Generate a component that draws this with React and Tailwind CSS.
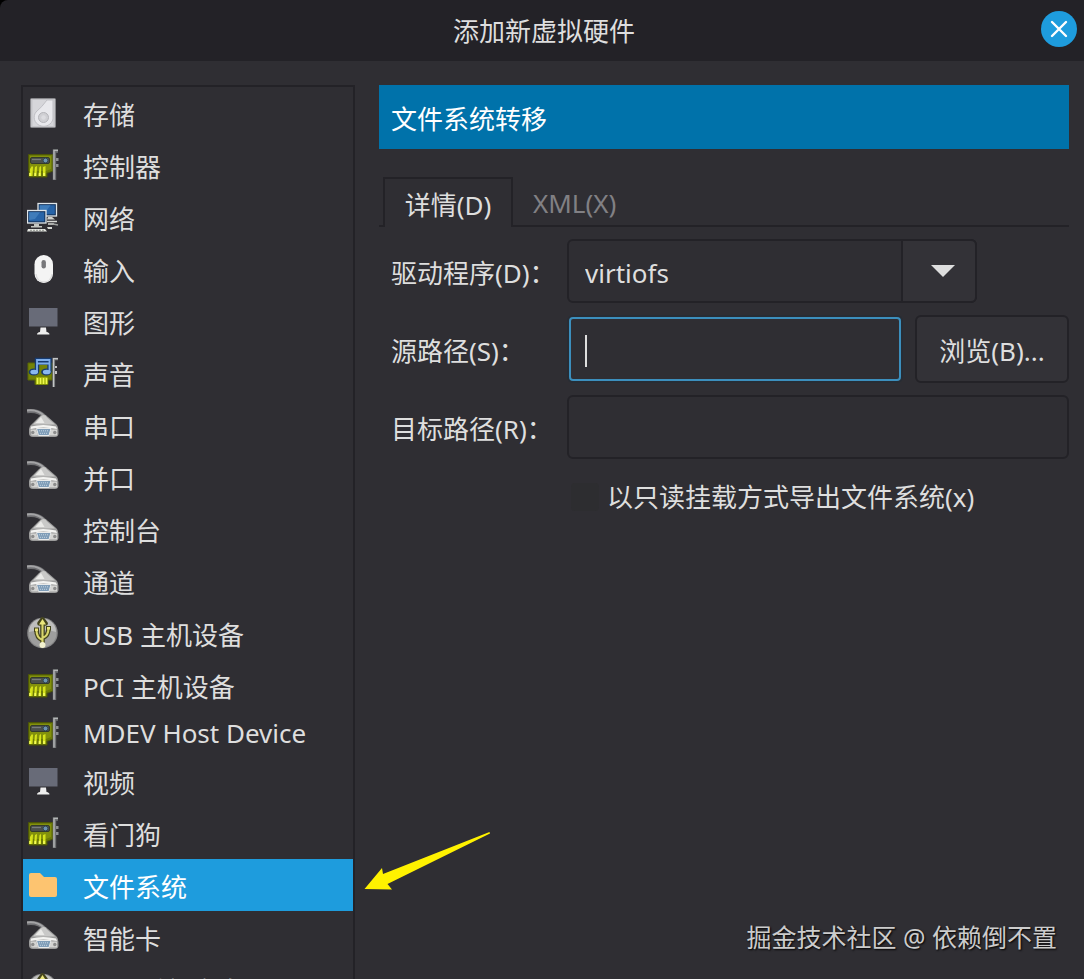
const base = "block h-8 w-8 shrink-0";

function StorageIcon() {
  return (
    <svg viewBox="0 0 32 32" className={base} aria-hidden="true">
      <rect x="3.5" y="1.5" width="25" height="29" rx="1" fill="#c4c4c8" stroke="#88888c" />
      <rect x="5.5" y="3" width="21" height="26" fill="#d6d6da" />
      <path d="M26 3 V22 A9.5 9 0 1 1 9 15 Q15 10 20 3 Z" fill="#e8e8ec" stroke="#bfbfc4" />
      <circle cx="16.5" cy="20.5" r="5" fill="#cfcfd3" stroke="#b4b4b9" />
      <circle cx="16.5" cy="20.5" r="2.3" fill="#dcdce0" />
    </svg>
  );
}

function CardIcon() {
  return (
    <svg viewBox="0 0 32 32" className={base} aria-hidden="true">
      <path d="M1.5 5.5 H26 V22 L21 24 H20 V28 H2 V22 H1.5 Z" fill="#6c7a08" stroke="#4c5508" />
      <path d="M3 7 H24 V20 L19 22 H3 Z" fill="#83910c" />
      <rect x="3.5" y="8.5" width="19" height="6" rx="1.5" fill="#4b504c" stroke="#343a2c" />
      <path d="M5 10.5 H14" stroke="#777b7b" strokeWidth="1.2" />
      <circle cx="18.5" cy="11.5" r="2.4" fill="#6d92b0" stroke="#314754" />
      <g fill="#d5e31b">
        <path d="M3 20 L5 17 L6 18 L5.5 27 H2.5Z" />
        <path d="M8 18 L10 17 L9.5 27 H7Z" />
        <path d="M12.5 18 L14 17 V27 H11.5Z" />
        <path d="M16 18 L18.5 17 V27 H16Z" />
      </g>
      <path d="M3 24 V27 M8.2 24 V27 M12.6 24 V27 M17 24 V27" stroke="#f2fb5c" strokeWidth="1.6" />
      <path d="M31 2 H27.5 V31" fill="none" stroke="#6f7173" strokeWidth="3.4" />
      <path d="M31 1.4 H27 V30.5" fill="none" stroke="#b4b6b7" strokeWidth="1.4" />
      <path d="M29 9 H31.5 V12 H29Z M29 15 H31.5 V18 H29Z" fill="#8e9092" />
    </svg>
  );
}

function Screen({ transform }) {
  return (
    <g transform={transform}>
      <rect x="0.5" y="0.5" width="18.5" height="12.5" fill="#15345d" stroke="#dfe5e8" strokeWidth="1.3" />
      <path d="M2.2 2.2 H17.3 V11.3 H2.2Z" fill="#2764a8" />
      <path d="M2.2 2.2 H13 L8 9 L2.2 10Z" fill="#3f7cba" />
    </g>
  );
}

function NetworkIcon() {
  return (
    <svg viewBox="0 0 32 32" className={base} aria-hidden="true">
      <Screen transform="translate(10.5 2)" />
      <path d="M21 16 H25 L28 18.5 H20Z" fill="#cfd1cd" />
      <path d="M20 20.5 H30 M21 23 H27" stroke="#d6d8d4" strokeWidth="1.3" />
      <path d="M26 23 L31 24" stroke="#9fa2a0" strokeWidth="1.5" />
      <Screen transform="translate(0 9)" />
      <path d="M7 23 H12 V25 H15 V26.5 H4 V25 H7Z" fill="#c3c6c1" />
      <path d="M1 28 H18 L20 30.5 H0Z" fill="#e4e6e1" />
      <path d="M3 29.3 H17" stroke="#8e918c" strokeDasharray="2 1" />
      <path d="M20 26 H25 V28 H21Z" fill="#d6d8d4" />
    </svg>
  );
}

function MouseIcon() {
  return (
    <svg viewBox="0 0 32 32" className={base} aria-hidden="true">
      <rect x="7.5" y="2" width="18.5" height="28" rx="9.2" fill="#f4f4f4" />
      <path d="M9 21 Q10 29 17 29 Q24 29 25 21" fill="none" stroke="#dcdcdc" strokeWidth="1.3" />
      <rect x="14.5" y="7" width="4.4" height="8.5" rx="2.2" fill="#77777a" />
    </svg>
  );
}

function DisplayIcon() {
  return (
    <svg viewBox="0 0 32 32" className={base} aria-hidden="true">
      <rect x="2" y="3" width="28.5" height="18.5" fill="#686b78" />
      <path d="M13.5 22.5 H19 L19.5 27 Q22.5 27.5 22.5 29.5 H10 Q10 27.5 13 27Z" fill="#eeeeee" />
    </svg>
  );
}

function SoundIcon() {
  return (
    <svg viewBox="0 0 32 32" className={base} aria-hidden="true">
      <path d="M1 6 H25 V23 H21 V27.5 H8 V23 H1Z" fill="#748307" stroke="#596606" />
      <path d="M9 20 H20.5 V27.5 H9Z" fill="#a3b30c" />
      <path d="M10.5 21 V27 M13.5 21 V27 M16.5 21 V27 M19.5 21 V27" stroke="#eef84e" strokeWidth="1.6" />
      <path d="M31 2 H26.8 V30" fill="none" stroke="#77797b" strokeWidth="2.6" />
      <path d="M31 1.6 H26.5 V30" fill="none" stroke="#c3c5c6" strokeWidth="1.2" />
      <path d="M29 9 V11 M29 14 V17" stroke="#f2f2f2" strokeWidth="1.5" />
      <path d="M10 15 V3 H22.5 V15 M10 5.5 H22.5" fill="none" stroke="#173b70" strokeWidth="4.4" />
      <ellipse cx="6.8" cy="15" rx="5.2" ry="3.6" fill="#173b70" />
      <ellipse cx="19.3" cy="15" rx="5.2" ry="3.6" fill="#173b70" />
      <path d="M10 15 V3 H22.5 V15 M10 6.5 H22.5" fill="none" stroke="#7dadea" strokeWidth="1.8" />
      <ellipse cx="7.2" cy="15" rx="3.9" ry="2.3" fill="#8ab8f0" />
      <ellipse cx="19.7" cy="15" rx="3.9" ry="2.3" fill="#8ab8f0" />
    </svg>
  );
}

function PortIcon() {
  return (
    <svg viewBox="0 0 32 32" className={base} aria-hidden="true">
      <path d="M0 2.2 Q11 0.5 18 8" fill="none" stroke="#6f6f72" strokeWidth="4" />
      <path d="M0 1.6 Q11 0 17.5 7.5" fill="none" stroke="#a4a4a6" strokeWidth="2" />
      <path d="M12 8 Q17 3 21 8 L28.5 14.5 Q32 17 31.5 25 Q31 28 28 28 H6 Q2 28 2 24 V20 Q3 16 6 14Z" fill="#9b9b9b" />
      <path d="M13 8 Q17 4 20 8.5 L28 15.5 H6Z" fill="#c9c9c8" />
      <path d="M14 8 L17.5 14 H8.5Z" fill="#eaeae8" />
      <path d="M4 17.5 Q16 14.5 29 17.5 L30 20 Q16 17 3.5 20Z" fill="#f4f4f2" />
      <path d="M3.5 20.5 H9 L11 26.5 H4.5Z M24 20.5 H30 V26.5 H22Z" fill="#d4d4d2" />
      <circle cx="5.8" cy="23.5" r="1.7" fill="#8c8c8c" />
      <circle cx="27.8" cy="23.5" r="1.7" fill="#8c8c8c" />
      <path d="M9.5 19.5 H24 L22 26.5 H11.5Z" fill="#7f9db8" stroke="#e9eaea" />
      <path d="M12 21.8 H22 M13 24.3 H21" stroke="#c8d8e4" strokeWidth="0.9" strokeDasharray="1 1" />
    </svg>
  );
}

function UsbIcon() {
  return (
    <svg viewBox="0 0 32 32" className={base} aria-hidden="true">
      <circle cx="15.5" cy="16" r="15.3" fill="#858586" />
      <circle cx="15.5" cy="16" r="14" fill="#9e9e9e" />
      <path d="M2 15 A13.5 13.5 0 0 1 29 15 Q18 11 2 15Z" fill="#bebebd" />
      <g fill="none" stroke="#44441c" strokeWidth="4.6" strokeLinejoin="round">
        <path d="M15.5 28 V5 M15.5 23 Q9.5 21 9.5 13 M15.5 21 Q21.5 19 21.5 11" />
        <path d="M12.5 6.5 L15.5 2.5 L18.5 6.5Z" />
      </g>
      <path d="M7 10.5 H12 V15 H7Z M19 9 H24 V13.5 H19Z" fill="#44441c" />
      <path d="M15.5 28 V5 M15.5 23 Q9.5 21 9.5 13 M15.5 21 Q21.5 19 21.5 11" fill="none" stroke="#d9d56c" strokeWidth="2.1" />
      <path d="M12 7.5 L15.5 2 L19 7.5Z M8 11.5 H11 V14 H8Z M20 10 H23 V12.5 H20Z" fill="#ebe67c" />
      <circle cx="15.5" cy="28" r="3" fill="#f2f1cf" />
    </svg>
  );
}

function FolderIcon() {
  return (
    <svg viewBox="0 0 32 32" className={base} aria-hidden="true">
      <path d="M2 6 Q2 4 4 4 H13 L17 8 H28 Q30 8 30 10 V26 Q30 28 28 28 H4 Q2 28 2 26Z" fill="#fdc470" />
    </svg>
  );
}

const items = [
  { label: "存储", Icon: StorageIcon },
  { label: "控制器", Icon: CardIcon },
  { label: "网络", Icon: NetworkIcon },
  { label: "输入", Icon: MouseIcon },
  { label: "图形", Icon: DisplayIcon },
  { label: "声音", Icon: SoundIcon },
  { label: "串口", Icon: PortIcon },
  { label: "并口", Icon: PortIcon },
  { label: "控制台", Icon: PortIcon },
  { label: "通道", Icon: PortIcon },
  { label: "USB 主机设备", Icon: UsbIcon },
  { label: "PCI 主机设备", Icon: CardIcon },
  { label: "MDEV Host Device", Icon: CardIcon, short: true },
  { label: "视频", Icon: DisplayIcon },
  { label: "看门狗", Icon: CardIcon },
  { label: "文件系统", Icon: FolderIcon, selected: true },
  { label: "智能卡", Icon: PortIcon },
  { label: "USB 重新定向", Icon: UsbIcon },
];

function HardwareItem({ label, Icon, short, selected }) {
  return (
    <li>
      <button
        type="button"
        aria-current={selected ? "true" : undefined}
        className={`flex w-full items-center gap-6 pl-1 text-left ${short ? "h-11" : "h-[52px]"} ${
          selected ? "bg-[#1e9cdd] text-white" : ""
        }`}
      >
        <Icon />
        <span className={`whitespace-nowrap ${short ? "" : "pt-1"}`}>{label}</span>
      </button>
    </li>
  );
}

export default function App() {
  return (
    <div className="relative flex h-screen flex-col overflow-hidden bg-[#2f2e33] font-['Noto_Sans','Noto_Sans_CJK_SC',sans-serif] text-[26px] leading-9 text-[#dedede]">
      <div className="shrink-0 bg-black">
        <header className="relative flex h-[61px] items-center justify-center rounded-tl-lg bg-[#232227]">
          <h1 className="pl-1">添加新虚拟硬件</h1>
          <button
            type="button"
            aria-label="关闭"
            className="absolute top-[11px] right-[7px] flex h-9 w-9 items-center justify-center rounded-full bg-[#1e9cdd]"
          >
            <svg viewBox="0 0 18 18" className="h-[18px] w-[18px]" aria-hidden="true">
              <path d="M2 2 L16 16 M16 2 L2 16" stroke="#fff" strokeWidth="2.4" strokeLinecap="round" />
            </svg>
          </button>
        </header>
      </div>

      <main className="flex min-h-0 flex-1 gap-6 pt-6 pr-[15px] pl-[21px]">
        <nav aria-label="硬件" className="w-[334px] shrink-0 overflow-hidden border-2 border-b-0 border-[#232227]">
          <ul>
            {items.map((item) => (
              <HardwareItem key={item.label} {...item} />
            ))}
          </ul>
        </nav>

        <section className="min-w-0 flex-1">
          <h2 className="flex h-16 items-center bg-[#0072aa] pt-1 pl-3 text-white">文件系统转移</h2>

          <div role="tablist" className="mt-7 flex h-[50px]">
            <span className="w-1 border-b-2 border-[#232227]" />
            <button type="button" role="tab" aria-selected="true" className="w-[130px] border-2 border-b-0 border-[#232227] pt-1">
              详情(D)
            </button>
            <button type="button" role="tab" aria-selected="false" className="flex-1 border-b-2 border-[#232227] pt-1 pl-5 text-left text-[#818084]">
              XML(X)
            </button>
          </div>

          <form className="mt-3 grid grid-cols-[176px_minmax(0,1fr)_154px] items-center gap-y-3 pl-3">
            <label htmlFor="driver" className="pt-1">驱动程序(D)：</label>
            <div className="relative col-span-2 h-16 w-[410px]">
              <select
                id="driver"
                defaultValue="virtiofs"
                className="h-full w-full appearance-none rounded-md border-2 border-[#232227] bg-transparent pt-1 pl-4 outline-none"
              >
                <option>virtiofs</option>
              </select>
              <span className="pointer-events-none absolute inset-y-0 right-0 flex w-[76px] items-center justify-center rounded-r-md border-2 border-[#232227] bg-[#333237] pl-2">
                <svg viewBox="0 0 24 12" className="h-3 w-6" aria-hidden="true">
                  <path d="M0 0 H24 L12 12Z" fill="#dedede" />
                </svg>
              </span>
            </div>

            <label htmlFor="source" className="pt-1">源路径(S)：</label>
            <div className="mr-3 flex h-[68px] items-center rounded-md border-2 border-[#272d35]">
              <div className="flex h-full w-full items-center rounded-sm border-2 border-[#3c8fbd] pt-1 pl-[14px]">
                <span className="h-8 w-0.5 bg-[#dedede]" aria-hidden="true" />
                <input id="source" className="h-full min-w-0 flex-1 bg-transparent caret-transparent outline-none" />
              </div>
            </div>
            <button type="button" className="h-[68px] rounded-md border-2 border-[#232227] bg-[#333237] pt-1">
              浏览(B)...
            </button>

            <label htmlFor="target" className="pt-1">目标路径(R)：</label>
            <input id="target" className="col-span-2 h-16 w-full rounded-md border-2 border-[#232227] bg-transparent px-4 outline-none" />

            <label className="col-span-2 col-start-2 flex items-center gap-2 pt-2 pl-1">
              <input type="checkbox" className="h-7 w-7 appearance-none rounded-sm bg-[#2d2d30]" />
              以只读挂载方式导出文件系统(x)
            </label>
          </form>
        </section>
      </main>

      <svg viewBox="0 0 126 60" className="absolute top-[831px] left-[364px] h-[60px] w-[126px]" aria-hidden="true">
        <path d="M125.5 1 L19 43 L18 37 L0.5 58 L28 58.5 L23.5 53 L126 2.5Z" fill="#fff200" />
      </svg>

      <p className="absolute right-[27px] bottom-6 text-[25px] font-normal text-[#cccccc] [text-shadow:1px_1px_2px_#000]">
        掘金技术社区 @ 依赖倒不置
      </p>
    </div>
  );
}
